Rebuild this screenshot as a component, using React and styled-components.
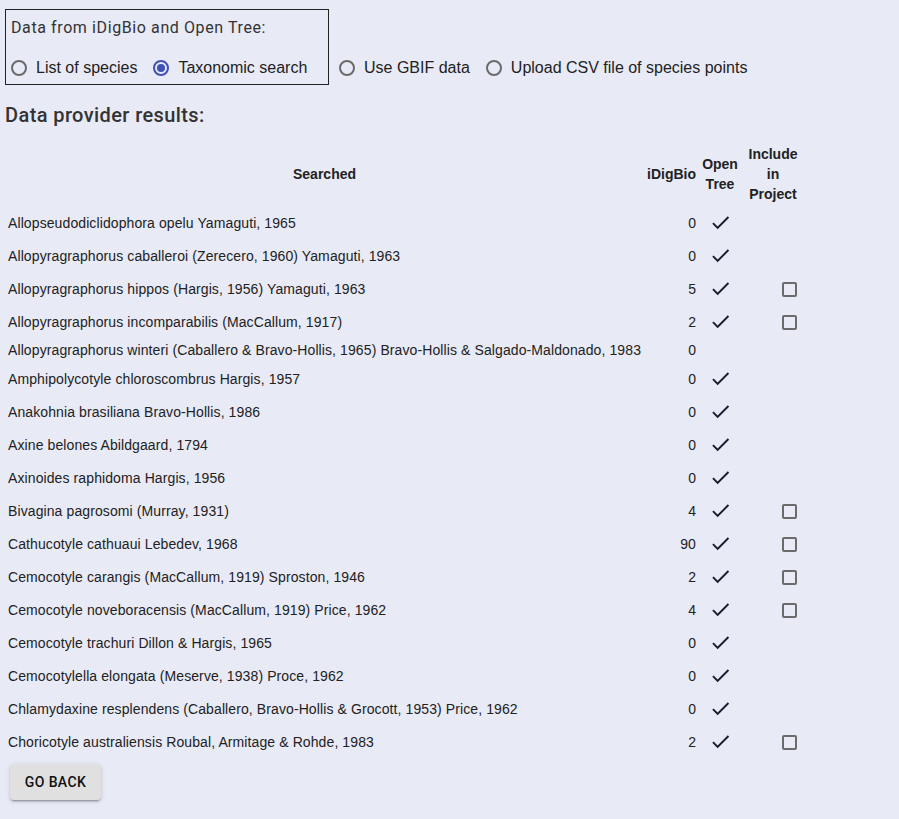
import React, { useState } from "react";
import styled, { createGlobalStyle } from "styled-components";

const GlobalStyle = createGlobalStyle`
  html, body {
    margin: 0;
    padding: 0;
    background: #e8eaf6;
  }
  body {
    font-family: "Liberation Sans", Arial, sans-serif;
    color: #222;
  }
`;

const rows = [
  ["Allopseudodiclidophora opelu Yamaguti, 1965", 0, true, false],
  ["Allopyragraphorus caballeroi (Zerecero, 1960) Yamaguti, 1963", 0, true, false],
  ["Allopyragraphorus hippos (Hargis, 1956) Yamaguti, 1963", 5, true, true],
  ["Allopyragraphorus incomparabilis (MacCallum, 1917)", 2, true, true],
  ["Allopyragraphorus winteri (Caballero & Bravo-Hollis, 1965) Bravo-Hollis & Salgado-Maldonado, 1983", 0, false, false],
  ["Amphipolycotyle chloroscombrus Hargis, 1957", 0, true, false],
  ["Anakohnia brasiliana Bravo-Hollis, 1986", 0, true, false],
  ["Axine belones Abildgaard, 1794", 0, true, false],
  ["Axinoides raphidoma Hargis, 1956", 0, true, false],
  ["Bivagina pagrosomi (Murray, 1931)", 4, true, true],
  ["Cathucotyle cathuaui Lebedev, 1968", 90, true, true],
  ["Cemocotyle carangis (MacCallum, 1919) Sproston, 1946", 2, true, true],
  ["Cemocotyle noveboracensis (MacCallum, 1919) Price, 1962", 4, true, true],
  ["Cemocotyle trachuri Dillon & Hargis, 1965", 0, true, false],
  ["Cemocotylella elongata (Meserve, 1938) Proce, 1962", 0, true, false],
  ["Chlamydaxine resplendens (Caballero, Bravo-Hollis & Grocott, 1953) Price, 1962", 0, true, false],
  ["Choricotyle australiensis Roubal, Armitage & Rohde, 1983", 2, true, true],
];

const Page = styled.div`
  padding: 9px 5px 16px;
`;

const SourceRow = styled.div`
  display: flex;
  align-items: flex-end;
`;

const SourceBox = styled.div`
  border: 1px solid #222;
  padding: 6px 0 6px 5px;
  width: 317px;
`;

const BoxLabel = styled.div`
  font-family: Roboto, sans-serif;
  font-size: 16px;
  letter-spacing: 0.6px;
  color: #333;
  line-height: 24px;
  margin-bottom: 18px;
`;

const Options = styled.div`
  display: flex;
  align-items: center;
`;

const RadioLabel = styled.label`
  display: flex;
  align-items: center;
  gap: 9px;
  font-size: 16px;
  line-height: 20px;
  color: #222;
  margin-right: 16px;
  cursor: pointer;
`;

const Circle = styled.span`
  box-sizing: border-box;
  width: 16px;
  height: 16px;
  border-radius: 50%;
  border: 2px solid ${(p) => (p.$on ? "#3f51b5" : "#6b6b6b")};
  display: flex;
  align-items: center;
  justify-content: center;
  &::after {
    content: "";
    width: 8px;
    height: 8px;
    border-radius: 50%;
    background: ${(p) => (p.$on ? "#3f51b5" : "transparent")};
  }
`;

const Outside = styled(Options)`
  padding: 0 0 7px 10px;
`;

const Heading = styled.h2`
  font-family: Roboto, sans-serif;
  font-weight: 500;
  font-size: 20px;
  letter-spacing: 0.4px;
  color: #333;
  margin: 18px 0 14px;
  line-height: 24px;
`;

const Table = styled.table`
  border-collapse: collapse;
  font-size: 14px;
`;

const Th = styled.th`
  font-weight: bold;
  line-height: 20px;
  padding: 3px 3px 2px;
  text-align: ${(p) => p.$align || "center"};
  width: ${(p) => p.$w || "auto"};
`;

const Td = styled.td`
  padding: ${(p) => (p.$icon ? "5px 3px" : "4px 3px")};
  line-height: 16px;
  letter-spacing: 0.1px;
  text-align: ${(p) => p.$align || "left"};
  white-space: nowrap;
  vertical-align: middle;
`;

const Box = styled.span`
  display: inline-block;
  box-sizing: border-box;
  width: 15px;
  height: 15px;
  border: 2px solid #6b6b6b;
  border-radius: 2px;
  margin-right: 5px;
  vertical-align: middle;
`;

const Check = styled.svg`
  display: block;
  margin: 0 auto;
  width: 23px;
  height: 23px;
`;

const BackButton = styled.button`
  margin: 6px 0 0 5px;
  width: 91px;
  height: 36px;
  border: none;
  border-radius: 4px;
  background: #e0e0e0;
  font-family: Roboto, sans-serif;
  font-weight: 500;
  font-size: 14px;
  letter-spacing: 0.4px;
  text-transform: uppercase;
  color: #111;
  box-shadow: 0 3px 1px -2px rgba(0,0,0,0.2), 0 2px 2px 0 rgba(0,0,0,0.14), 0 1px 5px 0 rgba(0,0,0,0.12);
`;

const Radio = ({ on, children, onClick }) => (
  <RadioLabel onClick={onClick}>
    <Circle $on={on} />
    {children}
  </RadioLabel>
);

const Tick = () => (
  <Check viewBox="0 0 24 24">
    <path fill="#1a1b2e" d="M9 16.17L4.83 12l-1.42 1.41L9 19 21 7l-1.41-1.41z" />
  </Check>
);

export default function App() {
  const [source, setSource] = useState("tax");
  return (
    <Page>
      <GlobalStyle />
      <SourceRow>
        <SourceBox>
          <BoxLabel>Data from iDigBio and Open Tree:</BoxLabel>
          <Options>
            <Radio on={source === "list"} onClick={() => setSource("list")}>List of species</Radio>
            <Radio on={source === "tax"} onClick={() => setSource("tax")}>Taxonomic search</Radio>
          </Options>
        </SourceBox>
        <Outside>
          <Radio on={source === "gbif"} onClick={() => setSource("gbif")}>Use GBIF data</Radio>
          <Radio on={source === "csv"} onClick={() => setSource("csv")}>Upload CSV file of species points</Radio>
        </Outside>
      </SourceRow>
      <Heading>Data provider results:</Heading>
      <Table>
        <thead>
          <tr>
            <Th>Searched</Th>
            <Th $align="right">iDigBio</Th>
            <Th $w="36px">Open Tree</Th>
            <Th $w="58px">Include in Project</Th>
          </tr>
        </thead>
        <tbody>
          {rows.map(([name, count, tree, include]) => (
            <tr key={name}>
              <Td>{name}</Td>
              <Td $align="right">{count}</Td>
              <Td $icon>{tree && <Tick />}</Td>
              <Td $align="right">{include && <Box />}</Td>
            </tr>
          ))}
        </tbody>
      </Table>
      <BackButton>Go back</BackButton>
    </Page>
  );
}
